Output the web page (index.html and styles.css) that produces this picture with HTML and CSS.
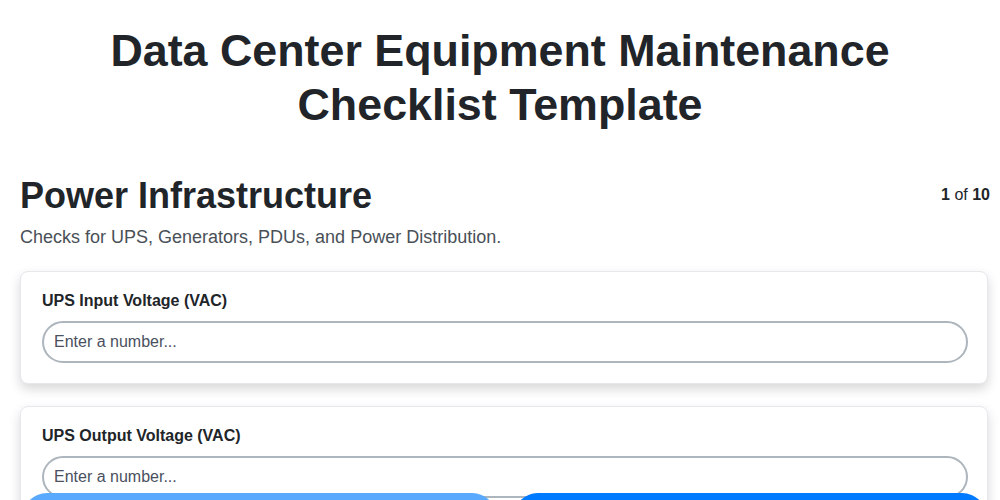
FILE: index.html
```html
<!DOCTYPE html>
<html lang="en">
<head>
<meta charset="utf-8">
<title>Data Center Equipment Maintenance Checklist Template</title>
<link rel="stylesheet" href="styles.css">
</head>
<body>
<main class="page">
  <h1 class="title">Data Center Equipment Maintenance Checklist Template</h1>
  <section class="section">
    <div class="section-head">
      <h2 class="section-title">Power Infrastructure</h2>
      <div class="counter"><b>1</b> of <b>10</b></div>
    </div>
    <p class="section-desc">Checks for UPS, Generators, PDUs, and Power Distribution.</p>
    <div class="card">
      <label class="field-label" for="f1">UPS Input Voltage (VAC)</label>
      <input class="field-input" id="f1" type="number" placeholder="Enter a number...">
    </div>
    <div class="card">
      <label class="field-label" for="f2">UPS Output Voltage (VAC)</label>
      <input class="field-input" id="f2" type="number" placeholder="Enter a number...">
    </div>
  </section>
</main>
<nav class="nav">
  <button class="btn btn-prev" type="button" disabled>Previous</button>
  <button class="btn btn-next" type="button">Next</button>
</nav>
</body>
</html>
```
FILE: styles.css
```css
* { box-sizing: border-box; }
html, body { margin: 0; padding: 0; background: #fff; }
body {
  font-family: "Liberation Sans", Arial, sans-serif;
  color: #212529;
  overflow: hidden;
}
.page {
  padding: 0 10px;
}
.title {
  margin: 24px 0 0;
  font-size: 44.8px;
  line-height: 1.2;
  font-weight: 700;
  text-align: center;
  padding: 0 80px;
}
.section {
  margin-top: 42px;
  padding-left: 10px;
}
.section-head {
  display: flex;
  justify-content: space-between;
  align-items: center;
}
.section-title {
  margin: 0;
  font-size: 36px;
  line-height: 1.2;
  font-weight: 700;
}
.counter {
  font-size: 16px;
  color: #212529;
}
.section-desc {
  margin: 7px 0 20px;
  font-size: 18px;
  line-height: 27px;
  color: #495057;
}
.card {
  margin: 0 2px 22px 0;
  padding: 20px 19px 20px 21px;
  background: #fff;
  border: 1px solid #e6e8ec;
  border-radius: 8px;
  box-shadow: 0 5px 12px rgba(0, 0, 0, 0.16);
}
.field-label {
  display: block;
  margin-bottom: 11px;
  font-size: 16px;
  font-weight: 700;
  color: #212529;
}
.field-input {
  display: block;
  width: 100%;
  padding: 10px;
  font-family: "Liberation Sans", Arial, sans-serif;
  font-size: 16px;
  line-height: 18px;
  color: #212529;
  background: #fff;
  border: 2px solid #adb5bd;
  border-radius: 22px;
  outline: none;
  -moz-appearance: textfield;
}
.field-input::placeholder { color: #4a5060; opacity: 1; }
.field-input::-webkit-outer-spin-button,
.field-input::-webkit-inner-spin-button { -webkit-appearance: none; margin: 0; }
.nav {
  position: fixed;
  left: 22px;
  right: 13px;
  bottom: -43px;
  display: flex;
  gap: 16px;
}
.btn {
  flex: 1;
  height: 50px;
  border: none;
  border-radius: 25px;
  font-family: "Liberation Sans", Arial, sans-serif;
  font-size: 18px;
  font-weight: 700;
  color: #fff;
  background: #007bff;
}
.btn-prev { background: #59a9ff; }
```
